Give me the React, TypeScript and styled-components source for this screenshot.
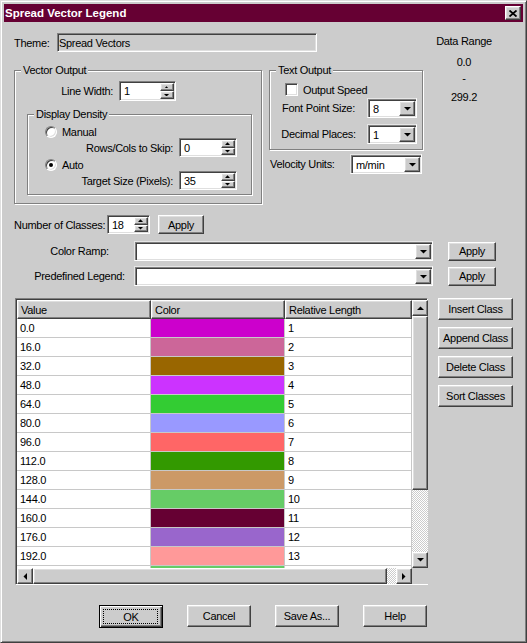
import React from "react";
import styled, { createGlobalStyle, css } from "styled-components";

const GlobalStyle = createGlobalStyle`
  html, body {
    margin: 0;
    padding: 0;
    background: #cccccc;
  }
  body {
    font-family: "Liberation Sans", Arial, sans-serif;
    font-size: 11px;
    letter-spacing: -0.3px;
    color: #000;
  }
  * {
    box-sizing: border-box;
  }
`;

// classic 3d edges
const raised = css`
  background: #cccccc;
  border: 1px solid;
  border-color: #ffffff #404040 #404040 #ffffff;
  box-shadow: inset -1px -1px 0 #808080, inset 1px 1px 0 #dfdfdf;
`;

const sunken = css`
  border: 1px solid;
  border-color: #808080 #ffffff #ffffff #808080;
  box-shadow: inset 1px 1px 0 #404040, inset -1px -1px 0 #dfdfdf;
  padding: 1px;
`;

type ArrowDir = "up" | "down" | "left" | "right";

const arrowPoints: Record<ArrowDir, string> = {
  up: "0,4 7,4 3.5,0.5",
  down: "0,0 7,0 3.5,3.5",
  left: "4,0 4,7 0.5,3.5",
  right: "0,0 0,7 3.5,3.5",
};

const Arrow = ({ dir, small }: { dir: ArrowDir; small?: boolean }) => {
  const horizontal = dir === "up" || dir === "down";
  const w = horizontal ? 7 : 4;
  const h = horizontal ? 4 : 7;
  const s = small ? 0.72 : 1;
  return (
    <svg width={w * s} height={h * s} viewBox={`0 0 ${w} ${h}`} style={{ display: "block" }}>
      <polygon points={arrowPoints[dir]} fill="#000" />
    </svg>
  );
};

const Window = styled.div`
  width: 527px;
  height: 643px;
  background: #cccccc;
  border: 1px solid;
  border-color: #dfdfdf #404040 #404040 #dfdfdf;
  box-shadow: inset 1px 1px 0 #ffffff, inset -1px -1px 0 #808080;
  padding: 3px;
  display: flex;
  flex-direction: column;
`;

const TitleBar = styled.div`
  height: 18px;
  background: #660033;
  display: flex;
  align-items: center;
  justify-content: space-between;
  padding: 0 2px 0 1px;
  flex-shrink: 0;
`;

const TitleText = styled.span`
  color: #fff;
  font-weight: bold;
  font-size: 11.5px;
  letter-spacing: 0;
`;

const CloseButton = styled.div`
  ${raised};
  width: 16px;
  height: 14px;
  display: flex;
  align-items: center;
  justify-content: center;
`;

const Body = styled.div`
  display: flex;
  flex-direction: column;
  padding: 0 11px 0 10px;
`;

const TopSection = styled.div`
  display: flex;
  margin-top: 11px;
`;

const LeftCol = styled.div`
  width: 409px;
  display: flex;
  flex-direction: column;
`;

const ThemeRow = styled.div`
  display: flex;
  align-items: center;
  height: 19px;
`;

const ThemeLabel = styled.span`
  width: 43px;
`;

const ThemeField = styled.div`
  ${sunken};
  width: 260px;
  height: 19px;
  background: #cccccc;
  display: flex;
  align-items: center;
  padding-left: 1px;
`;

const GroupsRow = styled.div`
  display: flex;
  align-items: flex-start;
  gap: 7px;
  margin-top: 18px;
`;

const Group = styled.div<{ $w: number; $h: number }>`
  position: relative;
  width: ${(p) => p.$w}px;
  height: ${(p) => p.$h}px;
  border: 1px solid #808080;
  box-shadow: inset 1px 1px 0 #ffffff, 1px 1px 0 #ffffff;
  display: flex;
  flex-direction: column;
  flex-shrink: 0;
`;

const DensityGroup = styled(Group)`
  margin: 13px 0 0 12px;
`;

const Legend = styled.span`
  position: absolute;
  top: -7px;
  left: 6px;
  padding: 0 2px;
  line-height: 13px;
  background: #cccccc;
`;

const FieldRow = styled.div<{ $top: number }>`
  display: flex;
  align-items: center;
  margin-top: ${(p) => p.$top}px;
`;

const FieldLabel = styled.span<{ $w: number }>`
  width: ${(p) => p.$w}px;
  padding-right: 6px;
  text-align: right;
  white-space: nowrap;
`;

const CenterLabel = styled.span<{ $w: number; $pl?: number }>`
  width: ${(p) => p.$w}px;
  padding-left: ${(p) => p.$pl ?? 0}px;
  text-align: center;
  white-space: nowrap;
`;

const PlainLabel = styled.span<{ $w: number; $pl?: number }>`
  width: ${(p) => p.$w}px;
  padding-left: ${(p) => p.$pl ?? 0}px;
  white-space: nowrap;
  flex-shrink: 0;
`;

const OptionRow = styled.div<{ $top: number; $left: number }>`
  display: flex;
  align-items: center;
  gap: 5px;
  margin-top: ${(p) => p.$top}px;
  padding-left: ${(p) => p.$left}px;
  height: 13px;
`;

const RadioCircle = styled.span<{ $checked?: boolean }>`
  width: 12px;
  height: 12px;
  border-radius: 50%;
  background: #fff;
  border: 1px solid;
  border-color: #808080 #ffffff #ffffff #808080;
  box-shadow: inset 1px 1px 0 #404040, inset -1px -1px 0 #dfdfdf;
  display: flex;
  align-items: center;
  justify-content: center;
  &::after {
    content: "";
    width: 4px;
    height: 4px;
    border-radius: 50%;
    background: #000;
    display: ${(p) => (p.$checked ? "block" : "none")};
  }
`;

const CheckBox = styled.span`
  width: 13px;
  height: 13px;
  background: #fff;
  border: 1px solid;
  border-color: #808080 #ffffff #ffffff #808080;
  box-shadow: inset 1px 1px 0 #404040, inset -1px -1px 0 #dfdfdf;
`;

const SpinField = styled.div<{ $w: number; $h: number }>`
  ${sunken};
  width: ${(p) => p.$w}px;
  height: ${(p) => p.$h}px;
  background: #fff;
  display: flex;
  flex-shrink: 0;
`;

const FieldText = styled.div`
  flex: 1;
  display: flex;
  align-items: center;
  padding-left: 3px;
  white-space: nowrap;
  overflow: hidden;
`;

const SpinButtons = styled.div`
  width: 14px;
  display: flex;
  flex-direction: column;
`;

const SpinButton = styled.div`
  ${raised};
  flex: 1;
  display: flex;
  align-items: center;
  justify-content: center;
`;

const Spinner = ({ value, w, h }: { value: string; w: number; h: number }) => (
  <SpinField $w={w} $h={h}>
    <FieldText>{value}</FieldText>
    <SpinButtons>
      <SpinButton>
        <Arrow dir="up" small />
      </SpinButton>
      <SpinButton>
        <Arrow dir="down" small />
      </SpinButton>
    </SpinButtons>
  </SpinField>
);

const ComboField = styled.div<{ $w: number; $h: number }>`
  width: ${(p) => p.$w}px;
  height: ${(p) => p.$h}px;
  background: #fff;
  border: 1px solid;
  border-color: #e6e6e6 #ffffff #ffffff #e6e6e6;
  box-shadow: inset 1px 1px 0 #808080, inset 2px 2px 0 #404040, inset -1px -1px 0 #dfdfdf;
  padding: 2px 1px 1px 2px;
  display: flex;
  flex-shrink: 0;
`;

const DropButton = styled.div`
  ${raised};
  width: 16px;
  display: flex;
  align-items: center;
  justify-content: center;
`;

const Combo = ({ value, w, h }: { value?: string; w: number; h: number }) => (
  <ComboField $w={w} $h={h}>
    <FieldText>{value}</FieldText>
    <DropButton>
      <Arrow dir="down" />
    </DropButton>
  </ComboField>
);

const TextCol = styled.div`
  width: 154px;
  display: flex;
  flex-direction: column;
`;

const DataRange = styled.div`
  width: 70px;
  margin-left: 6px;
  display: flex;
  flex-direction: column;
  align-items: center;
`;

const RangeLine = styled.span<{ $top: number }>`
  line-height: 13px;
  margin-top: ${(p) => p.$top}px;
`;

const Button = styled.div<{ $w: number; $h: number; $ml?: number }>`
  ${raised};
  width: ${(p) => p.$w}px;
  height: ${(p) => p.$h}px;
  margin-left: ${(p) => p.$ml ?? 0}px;
  display: flex;
  align-items: center;
  justify-content: center;
  white-space: nowrap;
  flex-shrink: 0;
`;

const DefaultButton = styled.div`
  position: relative;
  width: 64px;
  height: 23px;
  background: #cccccc;
  border: 1px solid #000;
  box-shadow: inset 1px 1px 0 #ffffff, inset -1px -1px 0 #404040, inset -2px -2px 0 #808080;
  display: flex;
  align-items: center;
  justify-content: center;
`;

const FocusRing = styled.span`
  position: absolute;
  inset: 3px 4px 3px 3px;
  border: 1px dotted #000;
`;

const Row = styled.div<{ $top: number }>`
  display: flex;
  align-items: center;
  margin-top: ${(p) => p.$top}px;
`;

const TableSection = styled.div`
  display: flex;
  align-items: flex-start;
  margin-top: 12px;
  padding-left: 1px;
`;

const Table = styled.div`
  ${sunken};
  width: 413px;
  height: 287px;
  background: #cccccc;
  display: grid;
  grid-template-columns: 395px 16px;
  grid-template-rows: 268px 16px;
`;

const GridArea = styled.div`
  overflow: hidden;
  background: #fff;
`;

const GridRows = styled.div`
  display: grid;
  grid-template-columns: 134px 134px 127px;
  grid-auto-rows: 19px;
`;

const HeaderCell = styled.div`
  ${raised};
  display: flex;
  align-items: center;
  padding-left: 3px;
  white-space: nowrap;
`;

const Cell = styled.div<{ $bg?: string }>`
  background: ${(p) => p.$bg ?? "#fff"};
  border-right: 1px solid #c8c8c8;
  border-bottom: 1px solid #c8c8c8;
  display: flex;
  align-items: center;
  padding-left: 3px;
`;

const VScroll = styled.div`
  display: flex;
  flex-direction: column;
`;

const HScroll = styled.div`
  display: flex;
`;

const ScrollButton = styled.div`
  ${raised};
  width: 16px;
  height: 16px;
  flex-shrink: 0;
  display: flex;
  align-items: center;
  justify-content: center;
`;

const Thumb = styled.div<{ $len: number; $vertical?: boolean }>`
  ${raised};
  flex-shrink: 0;
  ${(p) => (p.$vertical ? `height: ${p.$len}px;` : `width: ${p.$len}px;`)}
`;

const Track = styled.div`
  flex: 1;
  background: repeating-conic-gradient(#ffffff 0 25%, #cccccc 0 50%) 0 0 / 2px 2px;
`;

const Corner = styled.div`
  background: #cccccc;
`;

const SideButtons = styled.div`
  display: flex;
  flex-direction: column;
  gap: 7px;
  margin-left: 10px;
`;

const BottomRow = styled.div`
  display: flex;
  justify-content: center;
  gap: 24px;
  margin-top: 20px;
`;

const classes: [string, string][] = [
  ["0.0", "#cc00cc"],
  ["16.0", "#cc6699"],
  ["32.0", "#996600"],
  ["48.0", "#cc33ff"],
  ["64.0", "#33cc33"],
  ["80.0", "#9999ff"],
  ["96.0", "#ff6666"],
  ["112.0", "#339900"],
  ["128.0", "#cc9966"],
  ["144.0", "#66cc66"],
  ["160.0", "#660033"],
  ["176.0", "#9966cc"],
  ["192.0", "#ff9999"],
  ["208.0", "#66cc66"],
  ["224.0", "#3399ff"],
  ["240.0", "#ffcc00"],
  ["256.0", "#996633"],
  ["272.0", "#ff00ff"],
];

// rows that fit in the grid viewport (13 full + a sliver of the 14th)
const VISIBLE_ROWS = 14;

export default function App() {
  return (
    <>
      <GlobalStyle />
      <Window>
        <TitleBar>
          <TitleText>Spread Vector Legend</TitleText>
          <CloseButton>
            <svg width="8" height="7" viewBox="0 0 8 7">
              <path d="M0.5 0.5 L7.5 6.5 M7.5 0.5 L0.5 6.5" stroke="#000" strokeWidth="1.8" />
            </svg>
          </CloseButton>
        </TitleBar>

        <Body>
          <TopSection>
            <LeftCol>
              <ThemeRow>
                <ThemeLabel>Theme:</ThemeLabel>
                <ThemeField>Spread Vectors</ThemeField>
              </ThemeRow>

              <GroupsRow>
                <Group $w={248} $h={134}>
                  <Legend>Vector Output</Legend>
                  <FieldRow $top={10}>
                    <FieldLabel $w={104}>Line Width:</FieldLabel>
                    <Spinner value="1" w={57} h={20} />
                  </FieldRow>

                  <DensityGroup $w={225} $h={81}>
                    <Legend>Display Density</Legend>
                    <OptionRow $top={10} $left={17}>
                      <RadioCircle />
                      Manual
                    </OptionRow>
                    <FieldRow $top={0}>
                      <FieldLabel $w={151}>Rows/Cols to Skip:</FieldLabel>
                      <Spinner value="0" w={58} h={19} />
                    </FieldRow>
                    <OptionRow $top={1} $left={17}>
                      <RadioCircle $checked />
                      Auto
                    </OptionRow>
                    <FieldRow $top={0}>
                      <FieldLabel $w={151}>Target Size (Pixels):</FieldLabel>
                      <Spinner value="35" w={58} h={19} />
                    </FieldRow>
                  </DensityGroup>
                </Group>

                <TextCol>
                  <Group $w={154} $h={80}>
                    <Legend>Text Output</Legend>
                    <OptionRow $top={12} $left={15}>
                      <CheckBox />
                      Output Speed
                    </OptionRow>
                    <FieldRow $top={2}>
                      <CenterLabel $w={97}>Font Point Size:</CenterLabel>
                      <Combo value="8" w={50} h={20} />
                    </FieldRow>
                    <FieldRow $top={6}>
                      <CenterLabel $w={97}>Decimal Places:</CenterLabel>
                      <Combo value="1" w={50} h={20} />
                    </FieldRow>
                  </Group>
                  <FieldRow $top={4}>
                    <PlainLabel $w={81} $pl={1}>
                      Velocity Units:
                    </PlainLabel>
                    <Combo value="m/min" w={72} h={20} />
                  </FieldRow>
                </TextCol>
              </GroupsRow>
            </LeftCol>

            <DataRange>
              <RangeLine $top={2}>Data Range</RangeLine>
              <RangeLine $top={8}>0.0</RangeLine>
              <RangeLine $top={3}>-</RangeLine>
              <RangeLine $top={6}>299.2</RangeLine>
            </DataRange>
          </TopSection>

          <Row $top={11}>
            <PlainLabel $w={93}>Number of Classes:</PlainLabel>
            <Spinner value="18" w={43} h={19} />
            <Button $w={46} $h={19} $ml={8}>
              Apply
            </Button>
          </Row>

          <Row $top={7}>
            <CenterLabel $w={120} $pl={11}>
              Color Ramp:
            </CenterLabel>
            <Combo w={299} h={20} />
            <Button $w={48} $h={19} $ml={15}>
              Apply
            </Button>
          </Row>

          <Row $top={5}>
            <CenterLabel $w={120} $pl={11}>
              Predefined Legend:
            </CenterLabel>
            <Combo w={299} h={20} />
            <Button $w={48} $h={19} $ml={15}>
              Apply
            </Button>
          </Row>

          <TableSection>
            <Table>
              <GridArea>
                <GridRows>
                  <HeaderCell>Value</HeaderCell>
                  <HeaderCell>Color</HeaderCell>
                  <HeaderCell>Relative Length</HeaderCell>
                  {classes.slice(0, VISIBLE_ROWS).map(([value, color], i) => (
                    <React.Fragment key={value}>
                      <Cell>{i < VISIBLE_ROWS - 1 ? value : ""}</Cell>
                      <Cell $bg={color} />
                      <Cell>{i < VISIBLE_ROWS - 1 ? i + 1 : ""}</Cell>
                    </React.Fragment>
                  ))}
                </GridRows>
              </GridArea>
              <VScroll>
                <ScrollButton>
                  <Arrow dir="up" />
                </ScrollButton>
                <Thumb $vertical $len={174} />
                <Track />
                <ScrollButton>
                  <Arrow dir="down" />
                </ScrollButton>
              </VScroll>
              <HScroll>
                <ScrollButton>
                  <Arrow dir="left" />
                </ScrollButton>
                <Thumb $len={354} />
                <Track />
                <ScrollButton>
                  <Arrow dir="right" />
                </ScrollButton>
              </HScroll>
              <Corner />
            </Table>

            <SideButtons>
              <Button $w={75} $h={22}>Insert Class</Button>
              <Button $w={75} $h={22}>Append Class</Button>
              <Button $w={75} $h={22}>Delete Class</Button>
              <Button $w={75} $h={22}>Sort Classes</Button>
            </SideButtons>
          </TableSection>

          <BottomRow>
            <DefaultButton>
              <FocusRing />
              OK
            </DefaultButton>
            <Button $w={64} $h={22}>Cancel</Button>
            <Button $w={64} $h={22}>Save As...</Button>
            <Button $w={64} $h={22}>Help</Button>
          </BottomRow>
        </Body>
      </Window>
    </>
  );
}
